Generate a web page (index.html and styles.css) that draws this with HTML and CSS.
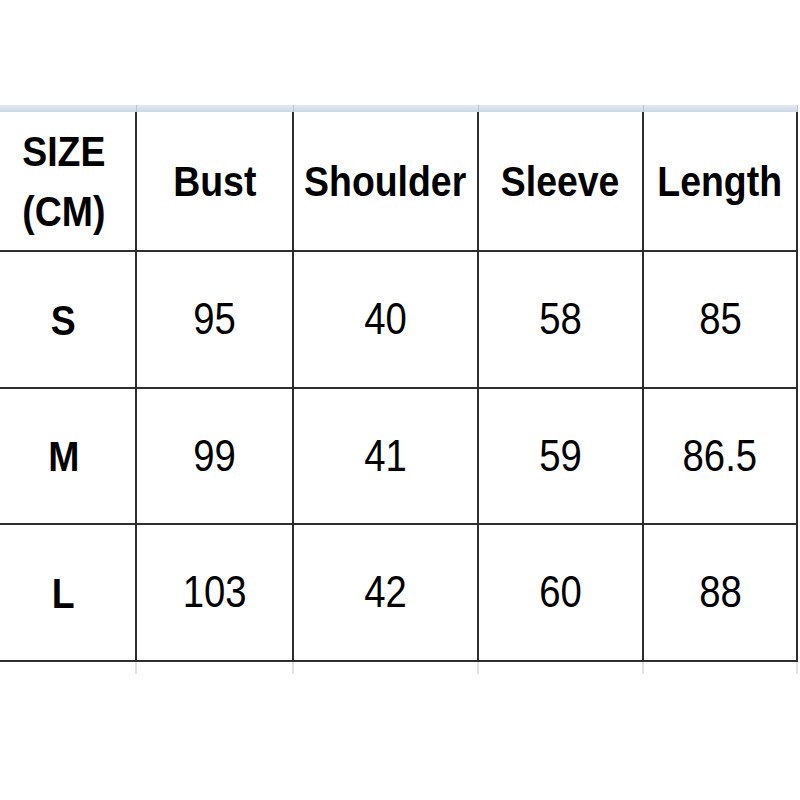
FILE: index.html
```html
<!DOCTYPE html>
<html>
<head>
<meta charset="utf-8">
<link rel="stylesheet" href="styles.css">
</head>
<body>
<div class="sheet">
  <div class="band">
    <div></div><div></div><div></div><div></div><div></div>
  </div>
  <div class="chart">
    <div class="cell head"><span>SIZE<br>(CM)</span></div>
    <div class="cell head"><span>Bust</span></div>
    <div class="cell head"><span>Shoulder</span></div>
    <div class="cell head"><span>Sleeve</span></div>
    <div class="cell head"><span>Length</span></div>

    <div class="cell head"><span>S</span></div>
    <div class="cell"><span>95</span></div>
    <div class="cell"><span>40</span></div>
    <div class="cell"><span>58</span></div>
    <div class="cell"><span>85</span></div>

    <div class="cell head"><span>M</span></div>
    <div class="cell"><span>99</span></div>
    <div class="cell"><span>41</span></div>
    <div class="cell"><span>59</span></div>
    <div class="cell"><span>86.5</span></div>

    <div class="cell head"><span>L</span></div>
    <div class="cell"><span>103</span></div>
    <div class="cell"><span>42</span></div>
    <div class="cell"><span>60</span></div>
    <div class="cell"><span>88</span></div>
  </div>
  <div class="ticks">
    <div></div><div></div><div></div><div></div><div></div>
  </div>
</div>
</body>
</html>
```

FILE: styles.css
```css
html, body {
  margin: 0;
  padding: 0;
  background: #ffffff;
}

body {
  font-family: "Liberation Sans", Arial, sans-serif;
  color: #000000;
  overflow: hidden;
}

.sheet {
  padding-top: 105px;
  margin-left: -8px;
  width: 806px;
}

.band,
.chart,
.ticks {
  display: grid;
  grid-template-columns: 145px 157px 185px 165px 154px;
}

.band {
  height: 7px;
  background: linear-gradient(#e2e9f3, #cdd7e6);
}

.band > div {
  border-right: 1px solid #b9c4d4;
}

.chart {
  grid-template-rows: 140px 137px 136px 137px;
}

.cell {
  box-sizing: border-box;
  border-right: 2px solid #2e2e2e;
  border-bottom: 2px solid #2e2e2e;
  display: flex;
  align-items: center;
  justify-content: center;
  text-align: center;
  font-size: 44px;
  line-height: 1.2;
}

.cell span {
  display: inline-block;
  transform: scaleX(0.87);
}

.head {
  font-weight: bold;
  font-size: 43px;
  line-height: 60px;
}

.head span {
  transform: scaleX(0.87);
}

.ticks {
  height: 12px;
}

.ticks > div {
  box-sizing: border-box;
  border-right: 2px dashed #e2e2e2;
}
```
